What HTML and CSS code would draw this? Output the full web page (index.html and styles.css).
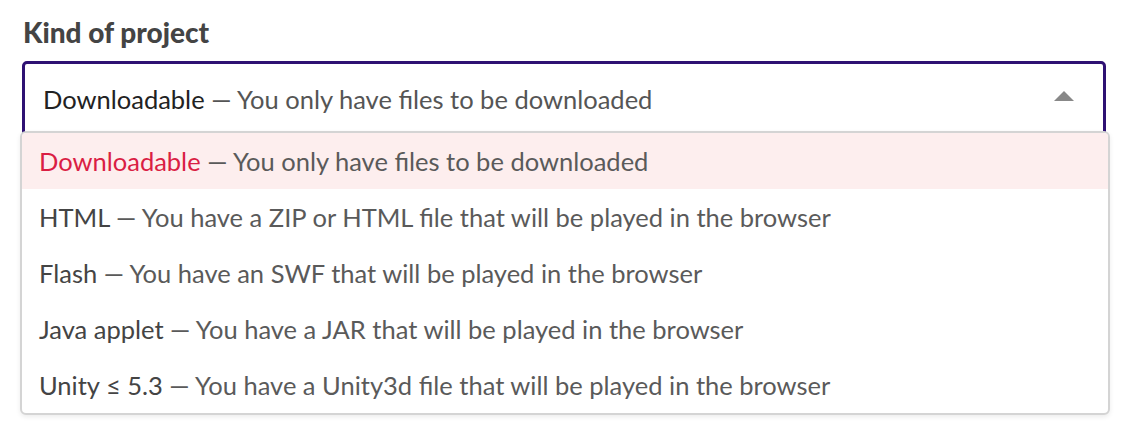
FILE: index.html
```html
<!DOCTYPE html>
<html lang="en">
<head>
  <meta charset="UTF-8">
  <title>Kind of project</title>
  <link rel="stylesheet" href="styles.css">
</head>
<body>
  <div class="field">
    <label class="field-label">Kind of project</label>
    <div class="select-box">
      <span class="select-value"><span class="opt-name">Downloadable</span> — You only have files to be downloaded</span>
      <span class="select-arrow"></span>
    </div>
    <ul class="select-menu">
      <li class="option selected"><span class="opt-name">Downloadable</span> — You only have files to be downloaded</li>
      <li class="option"><span class="opt-name">HTML</span> — You have a ZIP or HTML file that will be played in the browser</li>
      <li class="option"><span class="opt-name">Flash</span> — You have an SWF that will be played in the browser</li>
      <li class="option"><span class="opt-name">Java applet</span> — You have a JAR that will be played in the browser</li>
      <li class="option"><span class="opt-name">Unity ≤ 5.3</span> — You have a Unity3d file that will be played in the browser</li>
    </ul>
  </div>
</body>
</html>
```

FILE: styles.css
```css
* {
  margin: 0;
  padding: 0;
  box-sizing: border-box;
  font-family: Lato, 'Noto Sans', sans-serif;
}

body {
  background-color: #fff;
  color: #555;
  min-height: 432px;
}

.field {
  width: 1084px;
  margin-left: 22px;
  padding-top: 13px;
}

.field-label {
  display: block;
  font-size: 28px;
  font-weight: 900;
  color: #444;
  line-height: 38px;
  margin-left: 1px;
  margin-bottom: 10px;
}

.select-box {
  height: 75px;
  border: 3px solid #2f1173;
  border-radius: 5px;
  display: flex;
  align-items: center;
  justify-content: space-between;
  padding: 0 29px 0 18px;
  font-size: 25.5px;
  color: #555;
}

.select-box .opt-name {
  color: #222;
}

.select-arrow {
  width: 0;
  height: 0;
  border-left: 10px solid transparent;
  border-right: 10px solid transparent;
  border-bottom: 10px solid #888;
  margin-top: -6px;
}

.select-menu {
  list-style: none;
  position: relative;
  z-index: 1;
  margin: -5px -4px 0 -2px;
  background-color: #fff;
  border: 2px solid #d4d4d4;
  border-radius: 6px;
  box-shadow: 0 2px 5px rgba(0, 0, 0, 0.08);
  overflow: hidden;
}

.option {
  height: 56px;
  line-height: 56px;
  padding-left: 17px;
  font-size: 25.5px;
  color: #5a5a5a;
}

.option .opt-name {
  color: #444;
}

.option.selected {
  background-color: #fdeeee;
}

.option.selected .opt-name {
  color: #da1e44;
}
```
